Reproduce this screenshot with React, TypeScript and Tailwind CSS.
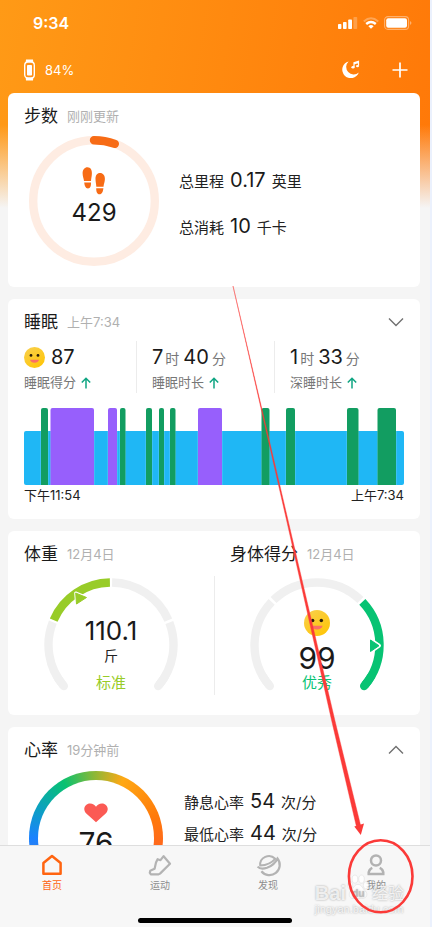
import type { ReactNode } from "react";

type StageKind = "rem" | "deep";
type Stage = { x: number; w: number; kind: StageKind };

const sleepStages: Stage[] = [
  { x: 17, w: 7, kind: "rem" },
  { x: 26.5, w: 43.5, kind: "deep" },
  { x: 84, w: 9, kind: "deep" },
  { x: 96, w: 5.5, kind: "rem" },
  { x: 122, w: 6, kind: "rem" },
  { x: 135, w: 5, kind: "rem" },
  { x: 146, w: 5.5, kind: "rem" },
  { x: 174, w: 24, kind: "deep" },
  { x: 237.5, w: 8, kind: "rem" },
  { x: 262, w: 9, kind: "rem" },
  { x: 323, w: 11.5, kind: "rem" },
  { x: 353.5, w: 18.5, kind: "rem" },
];

function arc(cx: number, cy: number, r: number, from: number, to: number) {
  const rad = Math.PI / 180;
  const x1 = cx + r * Math.cos(from * rad);
  const y1 = cy + r * Math.sin(from * rad);
  const x2 = cx + r * Math.cos(to * rad);
  const y2 = cy + r * Math.sin(to * rad);
  const large = to - from > 180 ? 1 : 0;
  return `M${x1.toFixed(2)} ${y1.toFixed(2)}A${r} ${r} 0 ${large} 1 ${x2.toFixed(2)} ${y2.toFixed(2)}`;
}

function Card({ children }: { children: ReactNode }) {
  return <section className="rounded-md bg-white">{children}</section>;
}

function CardTitle({ title, note, children }: { title: string; note: string; children?: ReactNode }) {
  return (
    <div className="flex h-6 items-center gap-[9px]">
      <h2 className="text-[17px] leading-6 whitespace-nowrap text-[#1a1a1a]">{title}</h2>
      <span className="text-[13px] leading-6 whitespace-nowrap text-[#b0b0b0]">{note}</span>
      {children}
    </div>
  );
}

function Chevron({ up, label }: { up?: boolean; label: string }) {
  return (
    <button type="button" aria-label={label} className="ml-auto">
      <svg width="16" height="10" viewBox="0 0 16 10" fill="none" stroke="#707070" strokeWidth="1.4">
        <path d={up ? "M1 8.5L8 1.5L15 8.5" : "M1 1.5L8 8.5L15 1.5"} />
      </svg>
    </button>
  );
}

function Face({ size }: { size: number }) {
  return (
    <svg width={size} height={size} viewBox="0 0 24 24" className="shrink-0" aria-hidden="true">
      <defs>
        <linearGradient id="face" x1="0" y1="0" x2="0.7" y2="1">
          <stop offset="0" stopColor="#f8d050" />
          <stop offset="1" stopColor="#ffc60a" />
        </linearGradient>
      </defs>
      <circle cx="12" cy="12" r="12" fill="url(#face)" />
      <circle cx="8" cy="9.6" r="1.6" fill="#2b1d0a" />
      <circle cx="16" cy="9.6" r="1.6" fill="#2b1d0a" />
      <path d="M6.8 14.6H17.2C16.6 17 14.6 18 12 18S7.400 17 6.800 14.600Z" fill="#fb6f66" />
    </svg>
  );
}

function UpArrow() {
  return (
    <svg width="10" height="12" viewBox="0 0 10 12" fill="none" stroke="#0fa582" strokeWidth="1.5" aria-hidden="true">
      <path d="M5 11.500V1.500M0.800 5.500L5 1.200L9.200 5.500" />
    </svg>
  );
}

function StatusBar() {
  return (
    <div className="flex h-[46px] items-center justify-between pr-[18px] pl-[33px] text-white">
      <span className="text-base leading-6 font-semibold">9:34</span>
      <div className="flex items-center gap-[5px]">
        <svg width="20" height="12" viewBox="0 0 20 12" fill="#fff" aria-hidden="true">
          <rect x="0" y="7" width="3.400" height="5" rx="0.800" />
          <rect x="5" y="5" width="3.600" height="7" rx="0.800" />
          <rect x="10.200" y="2.500" width="3.800" height="9.500" rx="0.800" />
          <rect x="15.400" y="0" width="3.800" height="12" rx="0.800" opacity="0.25" />
        </svg>
        <svg width="16" height="12" viewBox="0 0 16 12" fill="none" stroke="#fff" aria-hidden="true">
          <path d="M0.800 4.400Q8 -2 15.200 4.400" strokeWidth="2" opacity="0.3" />
          <path d="M3.200 7Q8 2.800 12.800 7" strokeWidth="2.400" />
          <path d="M5.400 9.200Q8 7 10.600 9.200L8 11.800Z" fill="#fff" stroke="none" />
        </svg>
        <svg width="28" height="14" viewBox="0 0 28 14" fill="none" aria-hidden="true">
          <rect x="0.600" y="0.600" width="24" height="12.800" rx="3.400" stroke="#fff" strokeWidth="1.100" opacity="0.4" />
          <rect x="2.200" y="2.200" width="20.800" height="9.600" rx="2" fill="#fff" />
          <path d="M26.200 5v4q1.200-0.800 1.200-2t-1.200-2" fill="#fff" opacity="0.5" />
        </svg>
      </div>
    </div>
  );
}

function DeviceBar() {
  return (
    <div className="flex h-[47px] items-center pr-[22px] pl-6 text-white">
      <svg width="11" height="22" viewBox="0 0 11 22" aria-hidden="true">
        <path d="M2 0.500H9L9.400 4H1.600ZM1.600 18H9.400L9 21.500H2Z" fill="#fff" />
        <rect x="0.700" y="3" width="9.600" height="16" rx="3.200" fill="#ff9016" stroke="#fff" strokeWidth="1.400" />
        <rect x="3" y="6" width="5" height="10.500" rx="0.800" fill="#fff" />
      </svg>
      <span className="ml-[10px] text-[13px] leading-5">84%</span>
      <div className="ml-auto flex items-center gap-8">
        <button type="button" aria-label="睡眠音乐">
          <svg width="19" height="19" viewBox="0 0 19 19" aria-hidden="true">
            <path d="M7.600 1.400A8.500 8.500 0 1 0 17.800 12.400A7.400 7.400 0 0 1 7.600 1.400Z" fill="#fff" />
            <path d="M13 7V2.800L17.500 1.300V5.800M13 3.900L17.500 2.400" fill="none" stroke="#fff" strokeWidth="1.200" />
            <ellipse cx="12" cy="7.300" rx="1.600" ry="1.200" fill="#fff" />
            <ellipse cx="16.500" cy="6.100" rx="1.500" ry="1.200" fill="#fff" />
          </svg>
        </button>
        <button type="button" aria-label="添加">
          <svg width="16" height="16" viewBox="0 0 16 16" stroke="#fff" strokeWidth="1.700" aria-hidden="true">
            <path d="M8 0.500V15.500M0.500 8H15.500" />
          </svg>
        </button>
      </div>
    </div>
  );
}

function Metric({ name, value, unit }: { name: string; value: string; unit: string }) {
  return (
    <p className="flex items-baseline gap-[6px] text-[15px] whitespace-nowrap text-[#222]">
      <span>{name}</span>
      <span className="text-xl text-[#1a1a1a]">{value}</span>
      <span>{unit}</span>
    </p>
  );
}

function StepsCard() {
  return (
    <Card>
      <div className="px-4 pt-[11px] pb-[21px]">
        <CardTitle title="步数" note="刚刚更新" />
        <div className="mt-2 ml-[5px] flex items-center gap-5">
          <div className="grid shrink-0 place-items-center">
            <svg width="130" height="130" viewBox="0 0 130 130" fill="none" className="col-start-1 row-start-1" aria-hidden="true">
              <circle cx="65" cy="65" r="60.800" stroke="#feece2" strokeWidth="8.400" />
              <path d={arc(65, 65, 60.8, -90, -70)} stroke="#f76b15" strokeWidth="8.400" strokeLinecap="round" />
            </svg>
            <div className="col-start-1 row-start-1 flex flex-col items-center pb-1">
              <svg width="24" height="28" viewBox="0 0 24 28" fill="#f76b15" aria-hidden="true">
                <path d="M5.500 0.300C8.600 0.300 10 3.200 9.900 6.500C9.800 9.500 9.200 11 9 14H2C1.800 11.500 0.600 9.500 0.600 6.200C0.600 2.800 2.600 0.300 5.500 0.300ZM2.200 15.500H9C9.100 19 8.400 21.400 6 21.400C3.400 21.400 2.600 18.500 2.200 15.500Z" />
                <path d="M18 6C21 6 23 8.500 22.900 12C22.900 15 21.700 17 21.500 19.700H14.300C14.200 17 13.500 15 13.500 12C13.400 8.600 15 6 18 6ZM14.200 21.200H21.400C21 24.500 20 27.300 17.500 27.300C15 27.300 14.200 24.500 14.200 21.200Z" />
              </svg>
              <span className="text-2xl leading-9 text-[#1a1a1a]">429</span>
            </div>
          </div>
          <div className="flex flex-col gap-4 pt-[6px] leading-7">
            <Metric name="总里程" value="0.17" unit="英里" />
            <Metric name="总消耗" value="10" unit="千卡" />
          </div>
        </div>
      </div>
    </Card>
  );
}

function SleepStat({ label, children, divided }: { label: string; children: ReactNode; divided?: boolean }) {
  return (
    <div className={divided ? "border-l border-[#ececec] pl-[15px]" : ""}>
      <div className="flex h-8 items-center whitespace-nowrap">{children}</div>
      <div className="flex h-5 items-center gap-[5px] text-[13px] whitespace-nowrap text-[#777]">
        {label}
        <UpArrow />
      </div>
    </div>
  );
}

function Duration({ hours, minutes }: { hours: string; minutes: string }) {
  return (
    <p className="flex items-baseline gap-[2px] text-xl leading-8 text-[#1a1a1a]">
      {hours}
      <span className="mr-[2px] text-sm text-[#777]">时</span>
      {minutes}
      <span className="ml-px text-sm text-[#777]">分</span>
    </p>
  );
}

function SleepCard() {
  return (
    <Card>
      <div className="px-4 pt-[11px] pb-[14px]">
        <CardTitle title="睡眠" note="上午7:34">
          <Chevron label="展开睡眠" />
        </CardTitle>
        <div className="mt-[7px] grid grid-cols-[112fr_138fr_130fr]">
          <SleepStat label="睡眠得分">
            <Face size={21} />
            <span className="ml-[6px] text-xl leading-8 text-[#1a1a1a]">87</span>
          </SleepStat>
          <SleepStat label="睡眠时长" divided>
            <Duration hours="7" minutes="40" />
          </SleepStat>
          <SleepStat label="深睡时长" divided>
            <Duration hours="1" minutes="33" />
          </SleepStat>
        </div>
        <svg viewBox="0 0 380 77" preserveAspectRatio="none" className="mt-[15px] block h-[77px] w-full" role="img" aria-label="睡眠阶段">
          <rect x="0" y="23" width="380" height="54" rx="2" fill="#1fb7f5" />
          {sleepStages.map((s) => (
            <path
              key={s.x}
              d={`M${s.x} 77V2q0-2 2-2H${s.x + s.w - 2}q2 0 2 2V77Z`}
              fill={s.kind === "deep" ? "#975ffc" : "#129d61"}
              stroke="#fff"
              strokeOpacity="0.25"
              strokeWidth="1"
              paintOrder="stroke"
            />
          ))}
        </svg>
        <div className="flex justify-between text-[13px] leading-5 text-[#222]">
          <span>下午11:54</span>
          <span>上午7:34</span>
        </div>
      </div>
    </Card>
  );
}

function BodyCard() {
  return (
    <Card>
      <div className="grid grid-cols-2 pt-[11px] pb-5">
        <div className="px-4">
          <CardTitle title="体重" note="12月4日" />
          <div className="mt-3 ml-5 grid w-[134px]">
            <svg width="134" height="117" viewBox="0 0 134 117" fill="none" strokeWidth="8.400" className="col-start-1 row-start-1" aria-hidden="true">
              <g stroke="#f0f0f0">
                <path d={arc(67, 67, 62.5, 139, 150)} strokeLinecap="round" />
                <path d={arc(67, 67, 62.5, 140, 201.5)} />
                <path d={arc(67, 67, 62.5, 271, 336.5)} />
                <path d={arc(67, 67, 62.5, 339, 400)} />
                <path d={arc(67, 67, 62.5, 30, 41)} strokeLinecap="round" />
              </g>
              <path d={arc(67, 67, 62.5, 203.5, 269)} stroke="#98cc28" />
              <path d="M31.700 15L42.500 19.500L32.500 26Z" fill="#98cc28" stroke="#fff" strokeWidth="3" strokeLinejoin="round" />
              <path d="M31.700 15L42.500 19.500L32.500 26Z" fill="#98cc28" stroke="#98cc28" strokeWidth="1" strokeLinejoin="round" />
            </svg>
            <div className="col-start-1 row-start-1 flex flex-col items-center pt-[38px]">
              <span className="text-[26px] leading-[30px] text-[#1a1a1a]">110.1</span>
              <span className="text-sm leading-5 text-[#222]">斤</span>
              <span className="mt-[7px] text-[15px] leading-5 text-[#98cc28]">标准</span>
            </div>
          </div>
        </div>
        <div className="relative px-4">
          <span className="absolute top-[34px] bottom-0 left-0 w-px bg-[#ececec]" />
          <CardTitle title="身体得分" note="12月4日" />
          <div className="mt-3 ml-5 grid w-[134px]">
            <svg width="134" height="117" viewBox="0 0 134 117" fill="none" strokeWidth="8.400" className="col-start-1 row-start-1" aria-hidden="true">
              <g stroke="#f0f0f0">
                <path d={arc(67, 67, 62.5, 139, 150)} strokeLinecap="round" />
                <path d={arc(67, 67, 62.5, 140, 223.5)} />
                <path d={arc(67, 67, 62.5, 226, 314)} />
              </g>
              <g stroke="#07c373">
                <path d={arc(67, 67, 62.5, 316.5, 400)} />
                <path d={arc(67, 67, 62.5, 30, 41)} strokeLinecap="round" />
              </g>
              <path d="M120.500 62L129 67.700L120.500 73.500Z" fill="#07c373" stroke="#fff" strokeWidth="4" strokeLinejoin="round" />
              <path d="M120.500 62L129 67.700L120.500 73.500Z" fill="#07c373" stroke="#07c373" strokeWidth="1" strokeLinejoin="round" />
            </svg>
            <div className="col-start-1 row-start-1 flex flex-col items-center pt-8">
              <Face size={26} />
              <span className="mt-[6px] text-3xl leading-8 text-[#1a1a1a]">99</span>
              <span className="text-[15px] leading-[18px] text-[#07c373]">优秀</span>
            </div>
          </div>
        </div>
      </div>
    </Card>
  );
}

function HeartCard() {
  return (
    <Card>
      <div className="px-4 pt-[11px] pb-5">
        <CardTitle title="心率" note="19分钟前">
          <Chevron up label="收起心率" />
        </CardTitle>
        <div className="mt-[9px] ml-[5px] flex items-start gap-[21px]">
          <div className="size-[134px] shrink-0 rounded-full bg-[conic-gradient(from_270deg,#1a82ff_0deg,#0ba3bb_30deg,#08c270_60deg,#8ab838_88deg,#ffa814_115deg,#ff7a0a_160deg,#ff6a1c_185deg,#ff5a3c_230deg,#1a82ff_360deg)] p-[9px]">
            <div className="flex size-full flex-col items-center rounded-full bg-white pt-[23px]">
              <svg width="24" height="20" viewBox="0 0 24 20" aria-hidden="true">
                <path d="M12 19.300L2.300 10.600C-2 6.200 1.200 0.600 6 0.600C8.800 0.600 10.800 2 12 3.800C13.200 2 15.200 0.600 18 0.600C22.800 0.600 26 6.200 21.700 10.600Z" fill="#fb5a54" />
              </svg>
              <span className="mt-[2px] text-3xl leading-9 text-[#1a1a1a]">76</span>
            </div>
          </div>
          <div className="flex flex-col gap-[1px] pt-4 leading-[30px]">
            <Metric name="静息心率" value="54" unit="次/分" />
            <Metric name="最低心率" value="44" unit="次/分" />
          </div>
        </div>
      </div>
    </Card>
  );
}

const tabs: { name: string; icon: ReactNode }[] = [
  {
    name: "首页",
    icon: <path d="M2.400 9L11 2L19.600 9V19.700H2.400Z" strokeLinejoin="round" />,
  },
  {
    name: "运动",
    icon: (
      <path
        d="M1.200 16.800L5.600 14.800L7 8.500L8.600 5.200L11.500 6.200L14.600 2.200L21 9.800L11 19.600L9.500 20.400H1.800Q0.200 18.500 1.200 16.800Z"
        strokeLinejoin="round"
        strokeWidth="2.200"
      />
    ),
  },
  {
    name: "发现",
    icon: (
      <>
        <path d="M3.200 11.600A8.700 8.700 0 0 1 18.200 4.800Q13 10.800 3.200 11.600Z" strokeWidth="2" strokeLinejoin="round" />
        <path d="M0.600 12.600Q3.500 16 10 13.800Q17.500 11 20.500 4.500A9.400 9.400 0 0 1 4.400 17.300" strokeWidth="2.200" />
      </>
    ),
  },
  {
    name: "我的",
    icon: (
      <>
        <circle cx="11" cy="6.500" r="5" />
        <path d="M7.300 13.800Q3.500 15.500 3.700 19.900H18.300Q18.500 15.500 14.700 13.800" />
      </>
    ),
  },
];

function TabBar() {
  return (
    <nav className="shrink-0 border-t border-[#dedede] bg-[#f7f7f7] pb-1">
      <div className="-ml-0.5 grid grid-cols-4 pt-2">
        {tabs.map((tab, i) => (
          <a
            key={tab.name}
            href="#"
            aria-current={i === 0 ? "page" : undefined}
            className={`flex flex-col items-center text-[10px] leading-[18px] ${i === 0 ? "text-[#ff6410]" : "text-[#8e8e8e]"}`}
          >
            <svg
              width="22"
              height="22"
              viewBox="0 0 22 22"
              fill="none"
              stroke={i === 0 ? "#ff6410" : "#b3b3b3"}
              strokeWidth="2.500"
              overflow="visible"
              aria-hidden="true"
            >
              {tab.icon}
            </svg>
            {tab.name}
          </a>
        ))}
      </div>
      <div className="mx-auto mt-6 h-[5px] w-[154px] rounded-full bg-black" />
    </nav>
  );
}

function Watermark() {
  return (
    <div
      aria-hidden="true"
      className="pointer-events-none absolute right-[26px] bottom-[12px] flex flex-col items-start whitespace-nowrap text-white/80 [text-shadow:0_0_2px_#999999]"
    >
      <div className="flex h-5 items-center">
        <span className="text-xl leading-5 font-bold [font-family:'Liberation_Sans',sans-serif]">Bai</span>
        <svg width="24" height="28" viewBox="0 0 25 32" className="-mt-3 shrink-0" fill="#fff" fillOpacity="0.8" stroke="#d5d5d5" strokeWidth="0.500">
          <ellipse cx="3.500" cy="14" rx="3" ry="4.200" />
          <ellipse cx="9" cy="7" rx="3.200" ry="4.600" />
          <ellipse cx="16.500" cy="7" rx="3.200" ry="4.600" />
          <ellipse cx="21.500" cy="14" rx="3" ry="4.200" />
          <path d="M12.500 13C17 13 17.500 18 21 20.500C25 25 21 30 16.500 29H8.500C3.500 30 0.500 25 4 20.500C7.500 18 8 13 12.500 13Z" />
          <text x="5.500" y="27" fontSize="12" fontFamily="Liberation Sans, sans-serif" fontWeight="700" fill="#b9b9b9" stroke="none">
            du
          </text>
        </svg>
        <span className="ml-0.5 text-base leading-5">经验</span>
      </div>
      <div className="text-[11px] leading-3 [font-family:'Liberation_Sans',sans-serif]">jingyan.baidu.com</div>
    </div>
  );
}

function Pointer() {
  return (
    <svg viewBox="0 0 430 927" className="pointer-events-none absolute inset-0 size-full" fill="none" aria-hidden="true">
      <path d="M233 286L288 520L334.800 720L360.500 825L356.500 827L331.500 720L286.500 520Z" fill="#fb3a38" stroke="#fb3a38" strokeWidth="0.400" />
      <path d="M354.300 826.500L364 823.500L360.800 835Z" fill="#fb3a38" />
      <ellipse cx="380.700" cy="876.300" rx="31.800" ry="36" stroke="#fb3a38" strokeWidth="2.600" />
    </svg>
  );
}

export default function App() {
  return (
    <div className="relative flex h-screen flex-col overflow-hidden border-r-2 border-[#ebf1fd] bg-[#f5f5f5] [font-family:Inter,'Noto_Sans_CJK_SC',sans-serif]">
      <main className="min-h-0 flex-1 overflow-hidden bg-[linear-gradient(to_bottom,transparent_60%,#f5f5f5),linear-gradient(100deg,#ff9a16,#ff7808)] bg-[length:100%_208px] bg-no-repeat">
        <StatusBar />
        <DeviceBar />
        <div className="flex flex-col gap-3 pr-[10px] pl-2">
          <StepsCard />
          <SleepCard />
          <BodyCard />
          <HeartCard />
        </div>
      </main>
      <TabBar />
      <Watermark />
      <Pointer />
    </div>
  );
}
